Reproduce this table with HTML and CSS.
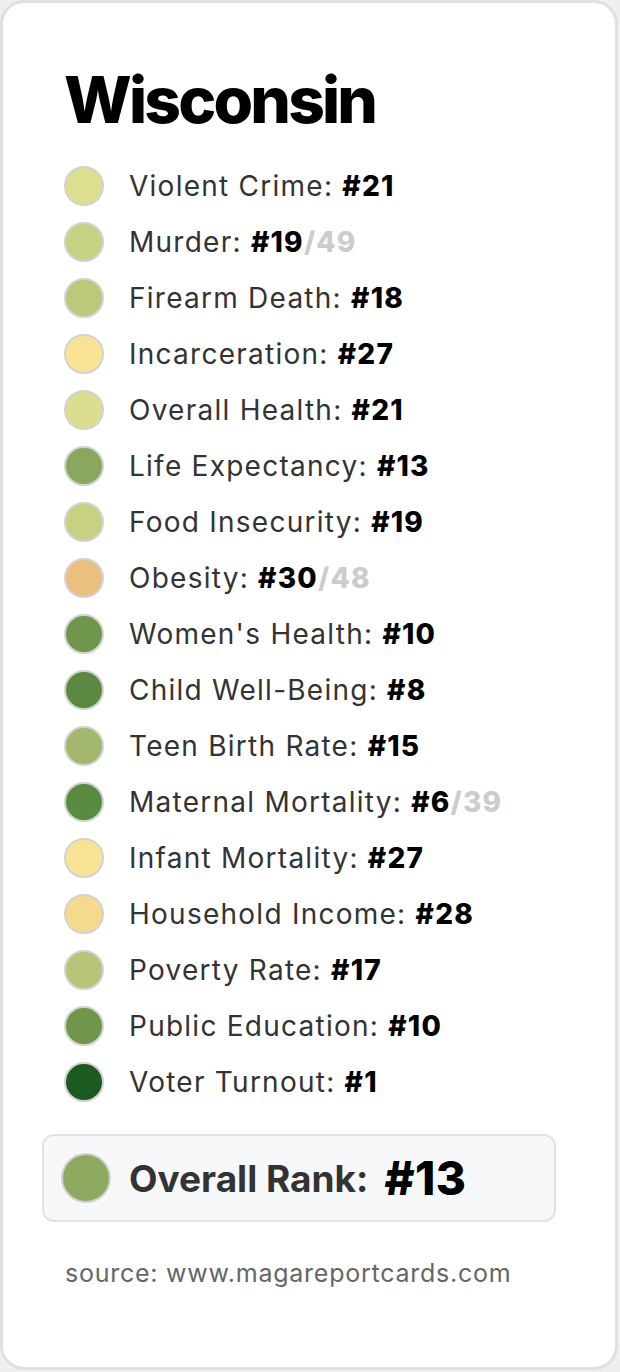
FILE: index.html
```html
<!DOCTYPE html>
<html lang="en">
<head>
<meta charset="utf-8">
<title>Wisconsin</title>
<link rel="stylesheet" href="styles.css">
</head>
<body>
<div class="card">
  <h1 class="title">Wisconsin</h1>
  <ul class="list">
    <li class="row"><span class="dot c-vc"></span><span>Violent Crime: <b class="num">#21</b></span></li>
    <li class="row"><span class="dot c-mu"></span><span>Murder: <b class="num">#19</b><b class="of">/49</b></span></li>
    <li class="row"><span class="dot c-fd"></span><span>Firearm Death: <b class="num">#18</b></span></li>
    <li class="row"><span class="dot c-in"></span><span>Incarceration: <b class="num">#27</b></span></li>
    <li class="row"><span class="dot c-oh"></span><span>Overall Health: <b class="num">#21</b></span></li>
    <li class="row"><span class="dot c-le"></span><span>Life Expectancy: <b class="num">#13</b></span></li>
    <li class="row"><span class="dot c-fi"></span><span>Food Insecurity: <b class="num">#19</b></span></li>
    <li class="row"><span class="dot c-ob"></span><span>Obesity: <b class="num">#30</b><b class="of">/48</b></span></li>
    <li class="row"><span class="dot c-wh"></span><span>Women's Health: <b class="num">#10</b></span></li>
    <li class="row"><span class="dot c-cw"></span><span>Child Well-Being: <b class="num">#8</b></span></li>
    <li class="row"><span class="dot c-tb"></span><span>Teen Birth Rate: <b class="num">#15</b></span></li>
    <li class="row"><span class="dot c-mm"></span><span>Maternal Mortality: <b class="num">#6</b><b class="of">/39</b></span></li>
    <li class="row"><span class="dot c-im"></span><span>Infant Mortality: <b class="num">#27</b></span></li>
    <li class="row"><span class="dot c-hi"></span><span>Household Income: <b class="num">#28</b></span></li>
    <li class="row"><span class="dot c-pr"></span><span>Poverty Rate: <b class="num">#17</b></span></li>
    <li class="row"><span class="dot c-pe"></span><span>Public Education: <b class="num">#10</b></span></li>
    <li class="row"><span class="dot c-vt"></span><span>Voter Turnout: <b class="num">#1</b></span></li>
  </ul>
  <div class="overall">
    <span class="dot dot-lg c-ov"></span>
    <span class="overall-label">Overall Rank:</span>
    <span class="overall-num">#13</span>
  </div>
  <p class="source">source: www.magareportcards.com</p>
</div>
</body>
</html>
```

FILE: styles.css
```css
html, body {
  margin: 0;
  padding: 0;
  background: #efefef;
}
body {
  font-family: Inter, "Noto Sans", "Liberation Sans", sans-serif;
}
.card {
  box-sizing: border-box;
  width: 618px;
  border: 3px solid #e0e0e0;
  border-radius: 24px;
  background: #ffffff;
  padding: 62px 0 79px 61px;
}
.title {
  margin: 0 0 31px 0;
  font-size: 64px;
  line-height: 70px;
  font-weight: 800;
  color: #000;
  letter-spacing: -2.8px;
}
.list {
  list-style: none;
  margin: 0;
  padding: 0;
  display: flex;
  flex-direction: column;
  gap: 16px;
}
.row {
  display: flex;
  align-items: center;
  gap: 25px;
  height: 40px;
  font-size: 28px;
  letter-spacing: 1.25px;
  color: #333;
}
.dot {
  box-sizing: border-box;
  flex: none;
  width: 40px;
  height: 40px;
  border-radius: 50%;
  border: 2px solid #d2d2d2;
}
.num {
  font-weight: 800;
  color: #000;
}
.of {
  font-weight: 800;
  color: #cccccc;
}
.overall {
  box-sizing: border-box;
  margin: 32px 0 0 -22px;
  width: 514px;
  height: 88px;
  border: 2px solid #e2e2e2;
  border-radius: 12px;
  background: #f7f8fa;
  display: flex;
  align-items: center;
  padding-left: 17px;
}
.dot-lg {
  width: 50px;
  height: 50px;
  margin-right: 18px;
}
.overall-label {
  font-size: 37px;
  font-weight: 700;
  color: #333;
}
.overall-num {
  margin-left: 16px;
  font-size: 46px;
  font-weight: 800;
  letter-spacing: 0.5px;
  color: #000;
}
.source {
  margin: 36px 0 0 1px;
  font-size: 25px;
  letter-spacing: 0.75px;
  color: #666;
}
.c-vc { background: #dbdf8e; }
.c-mu { background: #c8d283; }
.c-fd { background: #bdc87a; }
.c-in { background: #f8e294; }
.c-oh { background: #dbde8f; }
.c-le { background: #8aa85d; }
.c-fi { background: #c7d181; }
.c-ob { background: #ebbf7e; }
.c-wh { background: #6f964b; }
.c-cw { background: #5a8840; }
.c-tb { background: #a3b86c; }
.c-mm { background: #588a3f; }
.c-im { background: #f8e394; }
.c-hi { background: #f5d98c; }
.c-pr { background: #b8c477; }
.c-pe { background: #6f964b; }
.c-vt { background: #1d5a22; }
.c-ov { background: #8eaa60; }
```
